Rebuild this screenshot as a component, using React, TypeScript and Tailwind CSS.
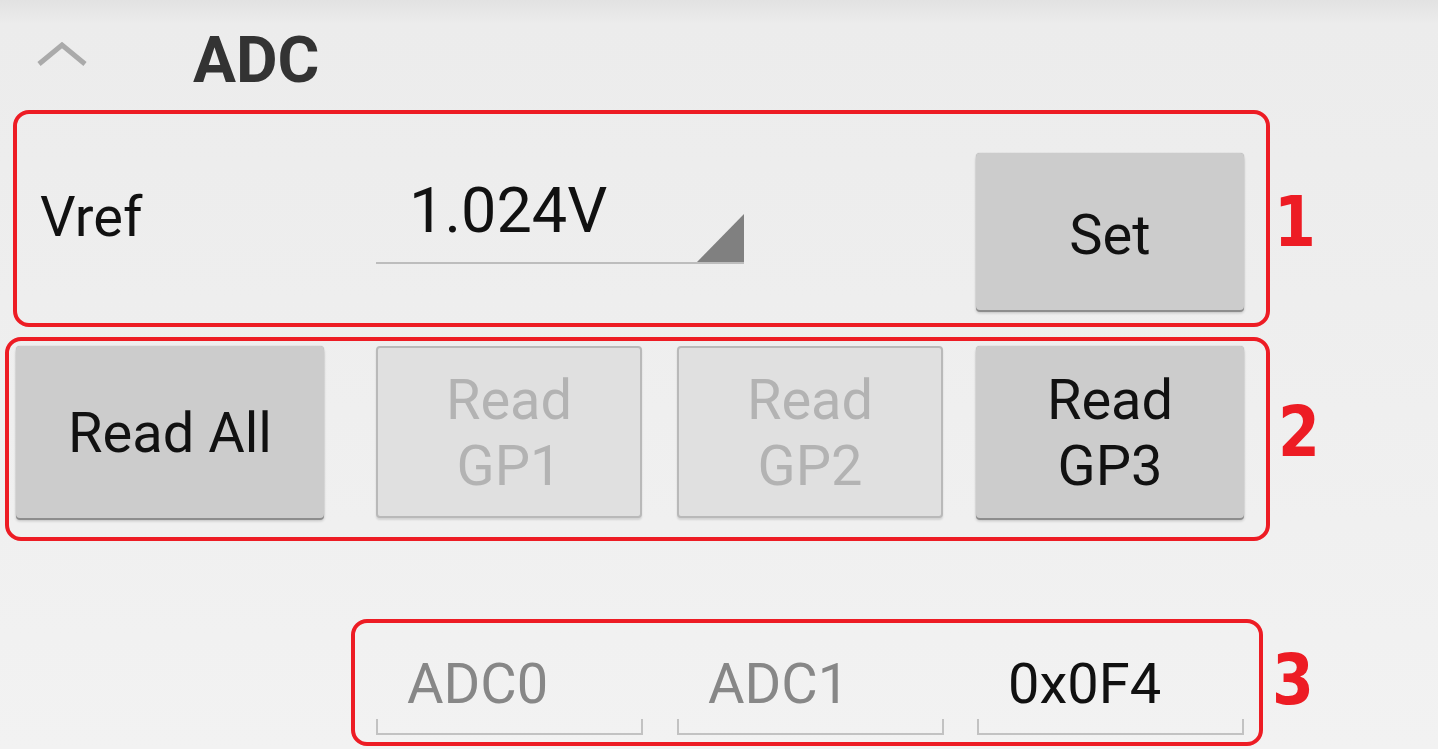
import React from "react";

const red = "border-[#ed1c24]";

function ChevronUp() {
  return (
    <svg width="52" height="26" viewBox="0 0 52 26" className="block">
      <polyline
        points="3,22 26,3 49,22"
        fill="none"
        stroke="#aaaaaa"
        strokeWidth="5"
      />
    </svg>
  );
}

function RaisedButton({
  children,
  width,
  disabled,
}: {
  children: React.ReactNode;
  width: string;
  disabled?: boolean;
}) {
  return (
    <div
      className={
        disabled
          ? `${width} flex h-[172px] shrink-0 items-center justify-center rounded-[4px] border-2 border-[#b9b9b9] bg-[#e0e0e0] text-[#b3b3b3] shadow-[0_2px_2px_rgba(0,0,0,0.12)]`
          : `${width} flex h-[172px] shrink-0 items-center justify-center rounded-[4px] bg-[#cccccc] text-[#111] shadow-[0_2px_0_#8d8d8d,0_3px_3px_rgba(0,0,0,0.2),0_0_1px_rgba(0,0,0,0.35)]`
      }
    >
      <div className="pt-[2px] text-center text-[56px] leading-[66px]">{children}</div>
    </div>
  );
}

function Field({ text, hint, ml }: { text: string; hint?: boolean; ml: string }) {
  return (
    <div className={`${ml} mt-[33px] flex h-[79px] w-[267px] shrink-0 flex-col justify-between`}>
      <div
        className={`pl-[31px] text-[56px] leading-none ${hint ? "text-[#878787]" : "text-[#111]"}`}
      >
        {text}
      </div>
      <div className="h-[16px] border-x-2 border-b-2 border-[#c2c2c2]" />
    </div>
  );
}

function Marker({ n, className }: { n: string; className: string }) {
  return (
    <div
      className={`${className} origin-left scale-x-[0.86] text-[70px] font-bold leading-none text-[#ed1c24]`}
      style={{ fontFamily: '"DejaVu Sans", sans-serif' }}
    >
      {n}
    </div>
  );
}

export default function App() {
  return (
    <div
      className="h-[749px] w-full overflow-hidden bg-[linear-gradient(to_bottom,#e2e2e2_0px,#ececec_24px,#eeeeee_300px,#f2f2f2_749px)]"
      style={{ fontFamily: 'Roboto, "Liberation Sans", sans-serif' }}
    >
      {/* header */}
      <div className="flex h-[110px] items-start">
        <div className="ml-[36px] mt-[42px]">
          <ChevronUp />
        </div>
        <div className="ml-[105px] mt-[29px] text-[64px] font-bold leading-none text-[#333333]">
          ADC
        </div>
      </div>

      {/* section 1 */}
      <div className="flex items-start">
        <div
          className={`ml-[13px] flex h-[217px] w-[1257px] items-start rounded-[16px] border-4 ${red}`}
        >
          <div className="mt-[75px] w-[359px] shrink-0 pl-[23px] text-[56px] leading-none text-[#111]">
            Vref
          </div>
          <div className="relative mt-[65px] h-[85px] w-[368px] shrink-0 border-b-2 border-[#bdbdbd]">
            <div className="pl-[33px] text-[63px] leading-none text-[#111]">1.024V</div>
            <svg
              width="47"
              height="48"
              viewBox="0 0 47 48"
              className="absolute bottom-0 right-0"
            >
              <polygon points="47,0 47,48 0,48" fill="#808080" />
            </svg>
          </div>
          <div className="ml-[232px] mt-[39px] flex h-[157px] w-[268px] shrink-0 items-center justify-center rounded-[4px] bg-[#cccccc] shadow-[0_2px_0_#8d8d8d,0_3px_3px_rgba(0,0,0,0.2),0_0_1px_rgba(0,0,0,0.35)]">
            <div className="pt-[6px] text-[56px] leading-none text-[#111]">Set</div>
          </div>
        </div>
        <Marker n="1" className="ml-[4px] mt-[77px]" />
      </div>

      {/* section 2 */}
      <div className="mt-[10px] flex items-start">
        <div
          className={`ml-[5px] flex h-[204px] w-[1265px] items-start rounded-[16px] border-4 ${red}`}
        >
          <div className="ml-[7px] mt-[5px] flex items-start">
            <RaisedButton width="w-[308px]">Read All</RaisedButton>
            <div className="ml-[52px]">
              <RaisedButton width="w-[266px]" disabled>
                Read
                <br />
                GP1
              </RaisedButton>
            </div>
            <div className="ml-[35px]">
              <RaisedButton width="w-[266px]" disabled>
                Read
                <br />
                GP2
              </RaisedButton>
            </div>
            <div className="ml-[33px]">
              <RaisedButton width="w-[268px]">
                Read
                <br />
                GP3
              </RaisedButton>
            </div>
          </div>
        </div>
        <Marker n="2" className="ml-[8px] mt-[60px]" />
      </div>

      {/* section 3 */}
      <div className="mt-[78px] flex items-start">
        <div
          className={`ml-[351px] flex h-[127px] w-[912px] items-start rounded-[16px] border-4 ${red}`}
        >
          <Field text="ADC0" hint ml="ml-[21px]" />
          <Field text="ADC1" hint ml="ml-[34px]" />
          <Field text="0x0F4" ml="ml-[33px]" />
        </div>
        <Marker n="3" className="ml-[9px] mt-[26px]" />
      </div>
    </div>
  );
}
